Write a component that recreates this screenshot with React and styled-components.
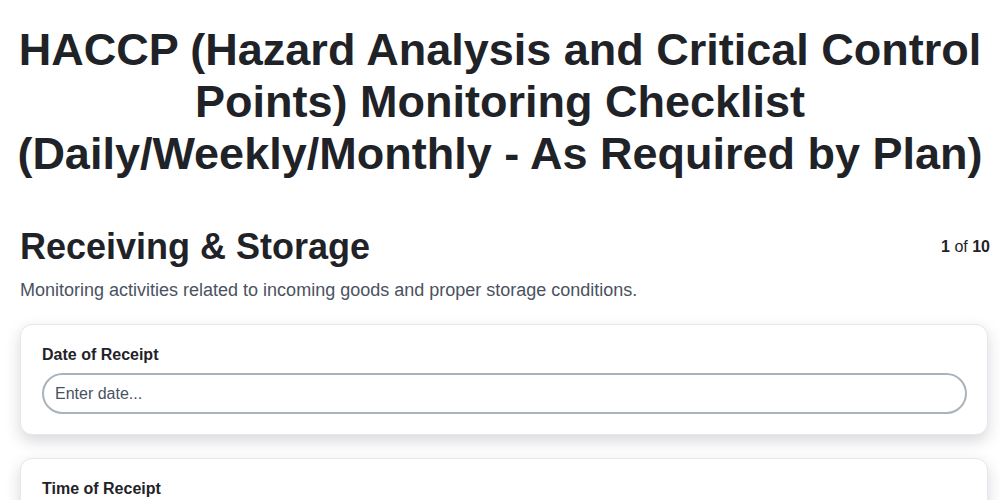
import React from "react";
import styled, { createGlobalStyle } from "styled-components";

const GlobalStyle = createGlobalStyle`
  * { box-sizing: border-box; }
  body {
    margin: 0;
    background: #fff;
    font-family: "Liberation Sans", Arial, sans-serif;
    color: #1f2328;
  }
`;

const Page = styled.div`
  width: 1000px;
  padding: 24px 0 40px;
`;

const Title = styled.h1`
  margin: 0 0 45px;
  padding: 0 8px;
  font-size: 45px;
  line-height: 52px;
  font-weight: 700;
  text-align: center;
  color: #1f2328;
`;

const Section = styled.section`
  padding: 0 10px 0 20px;
`;

const SectionHead = styled.div`
  display: flex;
  justify-content: space-between;
  align-items: center;
`;

const SectionTitle = styled.h2`
  margin: 0;
  font-size: 36px;
  line-height: 43px;
  font-weight: 700;
  color: #1f2328;
`;

const Counter = styled.span`
  font-size: 16px;
  color: #1f2328;
  b { font-weight: 700; }
`;

const Description = styled.p`
  margin: 10px 0 22px;
  font-size: 18px;
  line-height: 24px;
  color: #4a5261;
`;

const CardList = styled.div`
  display: flex;
  flex-direction: column;
  gap: 23px;
  margin-right: 2px;
`;

const Card = styled.div`
  background: #fff;
  border: 1px solid #e6e6ee;
  border-radius: 12px;
  padding: 20px 20px 20px 21px;
  box-shadow: 0 6px 15px rgba(40, 40, 60, 0.18);
`;

const Label = styled.label`
  display: block;
  font-size: 16px;
  line-height: 20px;
  font-weight: 700;
  color: #1f2328;
  margin-bottom: 8px;
`;

const Input = styled.input`
  display: block;
  width: 100%;
  height: 41px;
  border: 2px solid #a9b3bb;
  border-radius: 999px;
  padding: 0 11px;
  font-family: "Liberation Sans", Arial, sans-serif;
  font-size: 16px;
  color: #1f2328;
  background: #fff;
  outline: none;
  &::placeholder { color: #4a5261; }
`;

const fields = [
  { label: "Date of Receipt", placeholder: "Enter date..." },
  { label: "Time of Receipt", placeholder: "Enter time..." },
];

export default function App() {
  return (
    <Page>
      <GlobalStyle />
      <Title>
        HACCP (Hazard Analysis and Critical Control Points) Monitoring
        Checklist (Daily/Weekly/Monthly - As Required by Plan)
      </Title>
      <Section>
        <SectionHead>
          <SectionTitle>Receiving &amp; Storage</SectionTitle>
          <Counter>
            <b>1</b> of <b>10</b>
          </Counter>
        </SectionHead>
        <Description>
          Monitoring activities related to incoming goods and proper storage
          conditions.
        </Description>
        <CardList>
          {fields.map((f) => (
            <Card key={f.label}>
              <Label>{f.label}</Label>
              <Input placeholder={f.placeholder} />
            </Card>
          ))}
        </CardList>
      </Section>
    </Page>
  );
}
